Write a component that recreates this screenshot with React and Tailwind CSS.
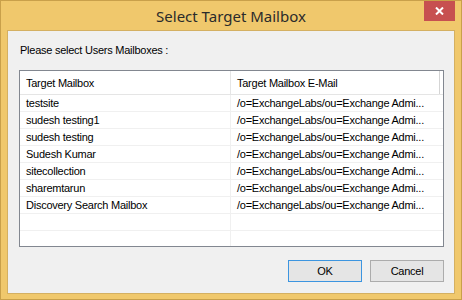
import React from "react";

const rows = [
  "testsite",
  "sudesh testing1",
  "sudesh testing",
  "Sudesh Kumar",
  "sitecollection",
  "sharemtarun",
  "Discovery Search Mailbox",
];

const mail = "/o=ExchangeLabs/ou=Exchange Admi...";

const App = () => {
  return (
    <div
      className="w-[462px] h-[300px] flex flex-col bg-[#f0c86c] border border-[#c9a04a] px-[6px] pb-[5px] text-black"
      style={{ fontFamily: '"Liberation Sans", Arial, sans-serif' }}
    >
      {/* title bar */}
      <div className="relative h-[29px] shrink-0 flex items-center justify-center">
        <span
          className="text-[15px] text-[#2b2b2b] leading-none mt-[2px]"
          style={{ fontFamily: '"Noto Sans", "Open Sans", sans-serif' }}
        >
          Select Target Mailbox
        </span>
        <button className="absolute top-0 right-[0px] w-[31px] h-[20px] bg-[#c75050] flex items-center justify-center">
          <svg width="9" height="8" viewBox="0 0 9 8">
            <path d="M1 0.5 L8 7.5 M8 0.5 L1 7.5" stroke="white" strokeWidth="2" />
          </svg>
        </button>
      </div>

      {/* client area */}
      <div className="flex-1 flex flex-col bg-[#f0f0f0] border border-[#d4b062] pl-[11px] pr-[10px] tracking-[-0.25px]">
        <div className="text-[11px] leading-[13px] mt-[13px] pl-[1px]">
          Please select Users Mailboxes :
        </div>

        <div className="mt-[13px] h-[177px] border border-[#828790] bg-white flex flex-col overflow-hidden">
          <div className="flex h-[24px] shrink-0 border-b border-[#e5e5e5] text-[11px]">
            <div className="w-[211px] border-r border-[#e5e5e5] flex items-center pl-[6px] pt-[1px]">
              Target Mailbox
            </div>
            <div className="w-[209px] border-r border-[#d5d5d5] flex items-center pl-[6px] pt-[1px]">
              Target Mailbox E-Mail
            </div>
          </div>
          {[...rows, "", ""].map((name, i) => (
            <div key={i} className="flex h-[17px] shrink-0 border-b border-[#f0f0f0] text-[11px]">
              <div className="w-[211px] border-r border-[#f0f0f0] flex items-center pl-[6px]">
                {name}
              </div>
              <div className="w-[209px] flex items-center pl-[6px] whitespace-nowrap overflow-hidden">
                {name ? mail : ""}
              </div>
            </div>
          ))}
        </div>

        <div className="flex justify-end gap-[8px] mt-[13px]">
          <button className="w-[74px] h-[22px] border border-[#3c95e0] bg-[#e5e5e5] text-[11px] flex items-center justify-center">
            OK
          </button>
          <button className="w-[74px] h-[22px] border border-[#acacac] bg-[#e5e5e5] text-[11px] flex items-center justify-center">
            Cancel
          </button>
        </div>
      </div>
    </div>
  );
};

export default App;
